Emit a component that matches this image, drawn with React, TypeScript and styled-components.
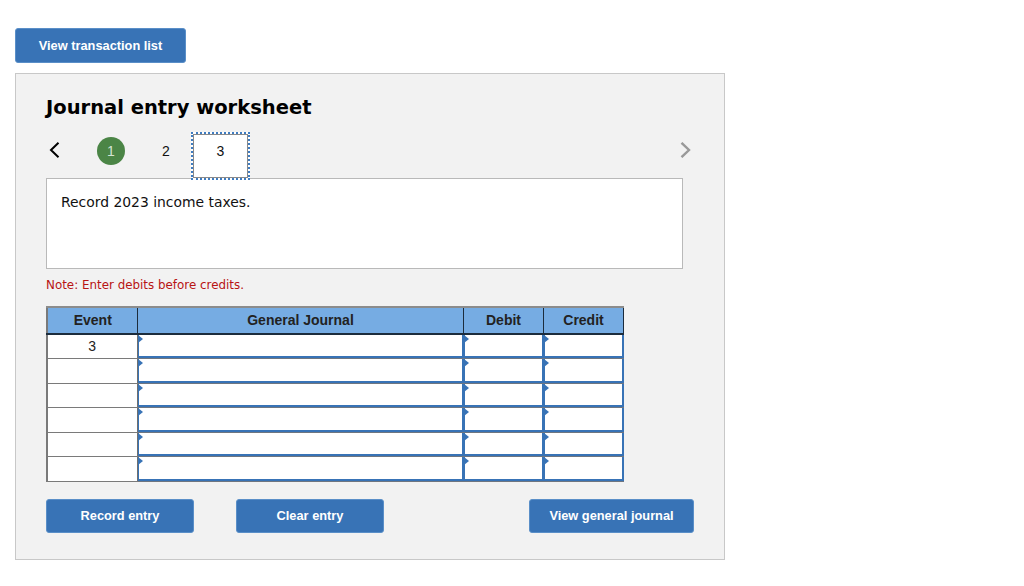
import { createGlobalStyle } from 'styled-components';
import styled from 'styled-components';

const GlobalStyle = createGlobalStyle`
  html, body {
    margin: 0;
    padding: 0;
    background: #fff;
    font-family: "Liberation Sans", Arial, sans-serif;
  }
`;

const Page = styled.div`
  width: 1024px;
  height: 586px;
  padding: 28px 0 0 15px;
  box-sizing: border-box;
  overflow: hidden;
`;

const ActionButton = styled.button<{ $width: number }>`
  display: block;
  width: ${({ $width }) => $width}px;
  height: 34px;
  padding: 0;
  border: 1px solid #5a8fc8;
  border-radius: 3px;
  background: #3873b6;
  color: #fff;
  font-family: "Liberation Sans", Arial, sans-serif;
  font-size: 12.8px;
  font-weight: bold;
`;

const TopButton = styled(ActionButton)`
  height: 35px;
`;

const Panel = styled.section`
  width: 710px;
  height: 487px;
  margin-top: 10px;
  padding: 22px 30px 0;
  box-sizing: border-box;
  border: 1px solid #c8c8c8;
  background: #f2f2f2;
`;

const Heading = styled.h2`
  margin: 0;
  font-family: "DejaVu Sans", Verdana, sans-serif;
  font-size: 19.5px;
  line-height: 24px;
  font-weight: bold;
  color: #000;
`;

const StepBar = styled.div`
  display: flex;
  align-items: flex-start;
  height: 46px;
  margin-top: 12px;
`;

const Arrow = styled.svg`
  display: block;
  flex: none;
  margin-top: 10px;
`;

const NextArrow = styled(Arrow)`
  margin-left: auto;
`;

const Step = styled.div<{ $done?: boolean; $current?: boolean }>`
  flex: none;
  display: flex;
  align-items: center;
  justify-content: center;
  box-sizing: border-box;
  font-size: 14px;
  color: ${({ $done }) => ($done ? '#d5e4d4' : '#111')};
  ${({ $done }) =>
    $done &&
    `
    width: 28px;
    height: 28px;
    margin: 5px 0 0 37px;
    border-radius: 50%;
    background: #4b8546;
  `}
  ${({ $done, $current }) =>
    !$done &&
    !$current &&
    `
    width: 28px;
    height: 28px;
    margin: 5px 0 0 27px;
  `}
  ${({ $current }) =>
    $current &&
    `
    width: 59px;
    height: 48px;
    margin-left: 11px;
    padding-bottom: 11px;
    background: #fff;
    outline: 2px dotted #3f7cc0;
    outline-offset: -2px;
    border: 2px solid transparent;
    box-shadow: inset 0 0 0 1px #8a8a8a;
    position: relative;
    z-index: 1;
  `}
`;

const PromptBox = styled.div`
  height: 91px;
  width: 637px;
  padding: 14px 14px 0;
  box-sizing: border-box;
  border: 1px solid #b9b9b9;
  background: #fff;
  font-family: "DejaVu Sans", Verdana, sans-serif;
  font-size: 13.9px;
  line-height: 18px;
  color: #111;
`;

const Note = styled.p`
  margin: 8px 0 0;
  font-family: "DejaVu Sans", Verdana, sans-serif;
  font-size: 11.9px;
  line-height: 16px;
  color: #b81414;
`;

const JournalTable = styled.table`
  margin-top: 13px;
  width: 576px;
  table-layout: fixed;
  border-collapse: collapse;
  border-top: 2px solid #8c8c8c;
  border-left: 2px solid #7a7a7a;
`;

const HeadCell = styled.th<{ $width: number }>`
  width: ${({ $width }) => $width}px;
  height: 27px;
  padding: 0 0 1px 1px;
  box-sizing: border-box;
  background: #76ace3;
  border-right: 1px solid #1c2c3c;
  border-bottom: 2px solid #1c2c3c;
  font-size: 14px;
  font-weight: bold;
  color: #222;
`;

const EventCell = styled.td`
  height: 24.5px;
  padding: 0 0 2px;
  box-sizing: border-box;
  background: #fff;
  border-right: 1px solid #6f6f6f;
  border-bottom: 1px solid #7a7a7a;
  text-align: center;
  font-size: 14px;
  color: #222;
`;

const EntryCell = styled.td`
  position: relative;
  padding: 0;
  box-sizing: border-box;
  background: #fff;
  border-right: 1px solid #3873b6;
  border-bottom: 1px solid #6f7680;
  box-shadow:
    inset 1px 0 0 #3873b6,
    inset -1px 0 0 #3873b6,
    inset 0 -2px 0 #3873b6;

  &::before {
    content: '';
    position: absolute;
    left: 0;
    top: 0;
    border-style: solid;
    border-width: 4px 0 4px 5px;
    border-color: transparent transparent transparent #3873b6;
  }
`;

const ButtonRow = styled.div`
  display: flex;
  align-items: center;
  width: 648px;
  margin-top: 17px;
  gap: 42px;
`;

const PushRight = styled(ActionButton)`
  margin-left: auto;
`;

const rows = ['3', '', '', '', '', ''];

export default function App() {
  return (
    <Page>
      <GlobalStyle />
      <TopButton $width={171}>View transaction list</TopButton>
      <Panel>
        <Heading>Journal entry worksheet</Heading>
        <StepBar>
          <Arrow width="14" height="16" viewBox="0 0 14 16" fill="none">
            <path d="M12.5 0.8 L5 8 L12.5 15.2" stroke="#000" strokeWidth="2" />
          </Arrow>
          <Step $done>1</Step>
          <Step>2</Step>
          <Step $current>3</Step>
          <NextArrow width="14" height="16" viewBox="0 0 14 16" fill="none">
            <path d="M1.5 0.8 L9 8 L1.5 15.2" stroke="#999" strokeWidth="2.4" />
          </NextArrow>
        </StepBar>
        <PromptBox>Record 2023 income taxes.</PromptBox>
        <Note>Note: Enter debits before credits.</Note>
        <JournalTable>
          <thead>
            <tr>
              <HeadCell $width={90}>Event</HeadCell>
              <HeadCell $width={326}>General Journal</HeadCell>
              <HeadCell $width={80}>Debit</HeadCell>
              <HeadCell $width={80}>Credit</HeadCell>
            </tr>
          </thead>
          <tbody>
            {rows.map((value, i) => (
              <tr key={i}>
                <EventCell>{value}</EventCell>
                <EntryCell />
                <EntryCell />
                <EntryCell />
              </tr>
            ))}
          </tbody>
        </JournalTable>
        <ButtonRow>
          <ActionButton $width={148}>Record entry</ActionButton>
          <ActionButton $width={148}>Clear entry</ActionButton>
          <PushRight $width={165}>View general journal</PushRight>
        </ButtonRow>
      </Panel>
    </Page>
  );
}
